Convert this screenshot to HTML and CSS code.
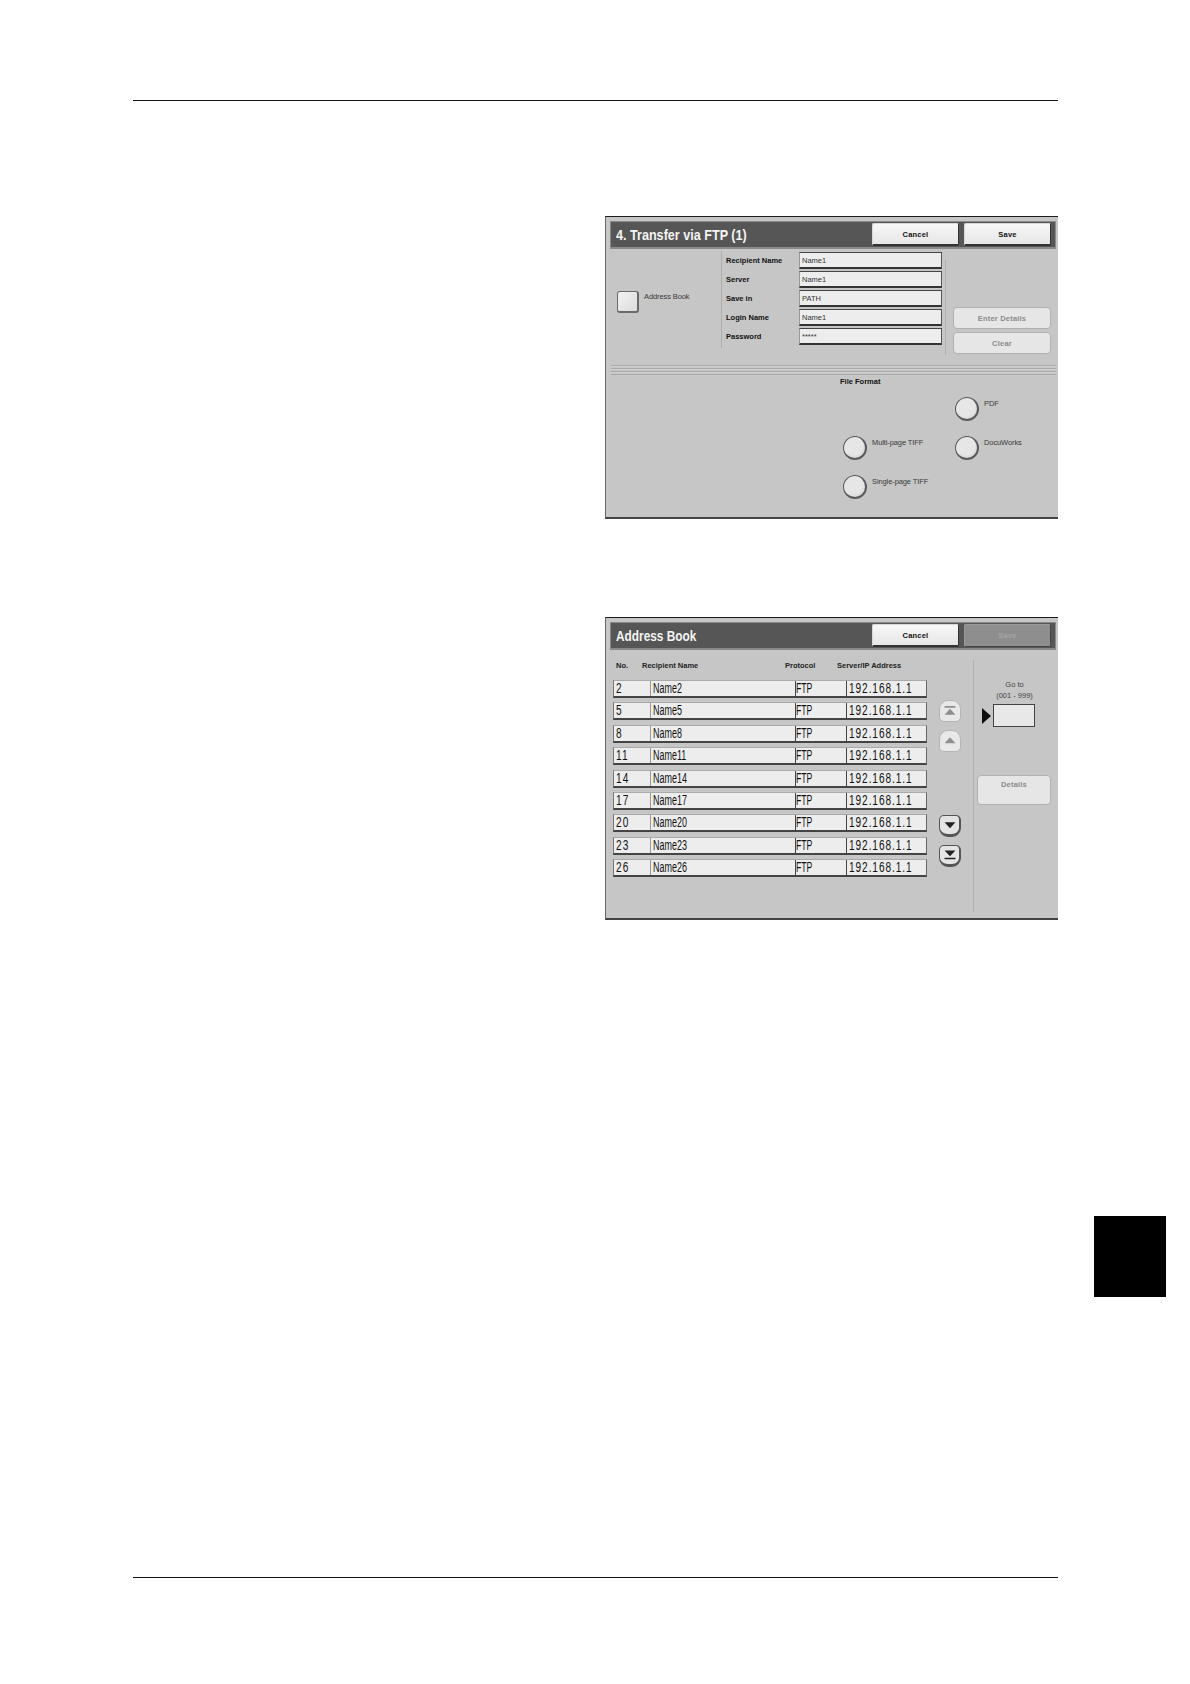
FILE: index.html
```html
<!DOCTYPE html>
<html lang="en">
<head>
<meta charset="utf-8">
<title>Transfer via FTP</title>
<link rel="stylesheet" href="styles.css">
</head>
<body>
<main class="sheet">
  <section class="panel panel-first">
    <header class="bar">
      <h2 class="bar-title">4. Transfer via FTP (1)</h2>
      <button class="btn btn-bar">Cancel</button>
      <button class="btn btn-bar">Save</button>
    </header>
    <div class="recipient">
      <div class="book">
        <span class="check"></span>
        <span class="thin-label book-label">Address Book</span>
      </div>
      <div class="fields">
        <span class="field-label">Recipient Name</span><span class="field-input">Name1</span>
        <span class="field-label">Server</span><span class="field-input">Name1</span>
        <span class="field-label">Save in</span><span class="field-input">PATH</span>
        <span class="field-label">Login Name</span><span class="field-input">Name1</span>
        <span class="field-label">Password</span><span class="field-input">*****</span>
      </div>
      <div class="actions">
        <button class="btn btn-off">Enter Details</button>
        <button class="btn btn-off">Clear</button>
      </div>
    </div>
    <div class="double-rule"></div>
    <div class="format">
      <h3 class="format-title">File Format</h3>
      <div class="radios">
        <span class="radio-slot"></span>
        <span class="radio-item"><span class="radio"></span><span class="thin-label radio-label">PDF</span></span>
        <span class="radio-item"><span class="radio"></span><span class="thin-label radio-label">Multi-page TIFF</span></span>
        <span class="radio-item"><span class="radio"></span><span class="thin-label radio-label">DocuWorks</span></span>
        <span class="radio-item"><span class="radio"></span><span class="thin-label radio-label">Single-page TIFF</span></span>
      </div>
    </div>
  </section>

  <section class="panel panel-second">
    <header class="bar">
      <h2 class="bar-title">Address Book</h2>
      <button class="btn btn-bar">Cancel</button>
      <button class="btn btn-bar btn-dim">Save</button>
    </header>
    <div class="book-body">
      <div class="list">
        <div class="list-head">
          <span>No.</span><span>Recipient Name</span><span>Protocol</span><span>Server/IP Address</span>
        </div>
        <div class="list-row"><span class="c-no"><span class="squeeze">2</span></span><span class="c-name"><span class="squeeze">Name2</span></span><span class="c-proto"><span class="squeeze">FTP</span></span><span class="c-ip"><span class="squeeze">192.168.1.1</span></span></div>
        <div class="list-row"><span class="c-no"><span class="squeeze">5</span></span><span class="c-name"><span class="squeeze">Name5</span></span><span class="c-proto"><span class="squeeze">FTP</span></span><span class="c-ip"><span class="squeeze">192.168.1.1</span></span></div>
        <div class="list-row"><span class="c-no"><span class="squeeze">8</span></span><span class="c-name"><span class="squeeze">Name8</span></span><span class="c-proto"><span class="squeeze">FTP</span></span><span class="c-ip"><span class="squeeze">192.168.1.1</span></span></div>
        <div class="list-row"><span class="c-no"><span class="squeeze">11</span></span><span class="c-name"><span class="squeeze">Name11</span></span><span class="c-proto"><span class="squeeze">FTP</span></span><span class="c-ip"><span class="squeeze">192.168.1.1</span></span></div>
        <div class="list-row"><span class="c-no"><span class="squeeze">14</span></span><span class="c-name"><span class="squeeze">Name14</span></span><span class="c-proto"><span class="squeeze">FTP</span></span><span class="c-ip"><span class="squeeze">192.168.1.1</span></span></div>
        <div class="list-row"><span class="c-no"><span class="squeeze">17</span></span><span class="c-name"><span class="squeeze">Name17</span></span><span class="c-proto"><span class="squeeze">FTP</span></span><span class="c-ip"><span class="squeeze">192.168.1.1</span></span></div>
        <div class="list-row"><span class="c-no"><span class="squeeze">20</span></span><span class="c-name"><span class="squeeze">Name20</span></span><span class="c-proto"><span class="squeeze">FTP</span></span><span class="c-ip"><span class="squeeze">192.168.1.1</span></span></div>
        <div class="list-row"><span class="c-no"><span class="squeeze">23</span></span><span class="c-name"><span class="squeeze">Name23</span></span><span class="c-proto"><span class="squeeze">FTP</span></span><span class="c-ip"><span class="squeeze">192.168.1.1</span></span></div>
        <div class="list-row"><span class="c-no"><span class="squeeze">26</span></span><span class="c-name"><span class="squeeze">Name26</span></span><span class="c-proto"><span class="squeeze">FTP</span></span><span class="c-ip"><span class="squeeze">192.168.1.1</span></span></div>
      </div>
      <div class="scroll">
        <div class="scroll-group">
          <span class="scroll-btn scroll-off"><svg viewBox="0 0 22 22" class="scroll-icon"><path d="M5 5.500h12v1.800H5zM11 8.500l6 6.500H5z"/></svg></span>
          <span class="scroll-btn scroll-off"><svg viewBox="0 0 22 22" class="scroll-icon"><path d="M11 7l6 6.500H5z"/></svg></span>
        </div>
        <div class="scroll-group">
          <span class="scroll-btn scroll-on"><svg viewBox="0 0 22 22" class="scroll-icon"><path d="M5 8h12l-6 6.500z"/></svg></span>
          <span class="scroll-btn scroll-on"><svg viewBox="0 0 22 22" class="scroll-icon"><path d="M5 6h12l-6 6.500zM5 14h12v1.800H5z"/></svg></span>
        </div>
      </div>
      <aside class="goto">
        <div class="goto-label">Go to<br>(001 - 999)</div>
        <div class="goto-entry"><span class="goto-arrow"></span><span class="goto-box"></span></div>
        <button class="btn btn-off btn-details">Details</button>
      </aside>
    </div>
  </section>
</main>
<div class="tab"></div>
</body>
</html>
```
FILE: styles.css
```css
* { box-sizing: border-box; }

html, body {
  margin: 0;
  height: 1684px;
  background: #fff;
  overflow: hidden;
}

body {
  position: relative;
  padding: 100px 132px 0 133px;
  font-family: "Liberation Sans", Arial, sans-serif;
  color: #111;
}

.sheet {
  height: 1478px;
  border-top: 1px solid #111;
  border-bottom: 1px solid #111;
}

.panel {
  width: 453px;
  height: 303px;
  margin-left: auto;
  background: #c6c6c6;
  border-top: 1px solid #1a1a1a;
  border-left: 1px solid #666;
  border-bottom: 2px solid #444;
  padding: 4px 0 0 4px;
}

.panel-first { margin-top: 115px; }
.panel-second { margin-top: 98px; }

.bar {
  width: 446px;
  height: 28px;
  display: flex;
  align-items: center;
  gap: 5px;
  padding: 0 4px 1px 5px;
  background: #565656;
  border: 1px solid #8a8a8a;
  border-bottom-width: 2px;
}

.bar-title {
  flex: 1;
  margin: 2px 0 0;
  color: #f4f4f4;
  font-size: 15px;
  line-height: 18px;
  font-weight: 700;
  white-space: nowrap;
  transform: scaleX(0.79);
  transform-origin: left center;
}

.panel-first .bar-title { transform: scaleX(0.84); }

.btn {
  display: block;
  margin: 0;
  padding: 1px 0 0;
  font-family: inherit;
  font-weight: 700;
  font-size: 7.500px;
  letter-spacing: 0.2px;
  color: #111;
  background: #efefef;
}

.btn-bar {
  width: 87px;
  height: 23px;
  border: 1px solid #d8d8d8;
  border-right: 1px solid #333;
  border-bottom: 2px solid #333;
  border-radius: 2px;
  background: linear-gradient(#f7f7f7, #e6e6e6);
}

.btn-dim {
  background: #8e8e8e;
  color: #a4a4a4;
  border: 1px solid #9a9a9a;
  border-right-color: #444;
  border-bottom-color: #444;
}

.btn-off {
  width: 98px;
  height: 22px;
  border: 1px solid #b0b0b0;
  border-radius: 4px;
  background: #e6e6e6;
  color: #8a8a8a;
}

.recipient {
  display: flex;
  height: 115px;
}

.book {
  width: 111px;
  flex: none;
  display: flex;
  gap: 5px;
  padding: 42px 0 0 7px;
}

.check {
  width: 22px;
  height: 22px;
  flex: none;
  background: linear-gradient(135deg, #f2f2f2, #dcdcdc);
  border: 1px solid #6a6a6a;
  border-right-width: 2px;
  border-bottom-width: 2px;
  border-radius: 3px;
}

.thin-label {
  font-size: 7.500px;
  line-height: 10px;
  color: #3a3a3a;
  white-space: nowrap;
  letter-spacing: -0.1px;
}

.book-label { margin-top: 1px; }

.fields {
  width: 221px;
  height: 97px;
  flex: none;
  margin-top: 2px;
  border-left: 1px solid #aeaeae;
  display: grid;
  grid-template-columns: 73px 143px;
  grid-auto-rows: 19px;
  padding-left: 4px;
  align-items: center;
}

.field-label {
  font-size: 7.500px;
  font-weight: 700;
  color: #111;
  margin-top: -1px;
  white-space: nowrap;
}

.field-input {
  height: 17px;
  padding: 1px 0 0 2px;
  font-size: 7.500px;
  line-height: 14px;
  color: #333;
  background: #ededed;
  border: 1px solid #999;
  border-top-color: #444;
  border-bottom: 2px solid #333;
  border-right-color: #555;
}

.actions {
  margin: 11px 0 0 3px;
  width: 106px;
  height: 95px;
  flex: none;
  border-left: 1px solid #b0b0b0;
  padding: 47px 0 0 7px;
  display: flex;
  flex-direction: column;
  gap: 3px;
}

.double-rule {
  width: 445px;
  height: 10px;
  margin: 1px 0 0 1px;
  background: repeating-linear-gradient(#aaa 0 1px, #cfcfcf 1px 2px, #c6c6c6 2px 3px);
}

.format {
  padding: 2px 0 0 230px;
}

.format-title {
  margin: 0;
  font-size: 7.500px;
  line-height: 10px;
  font-weight: 700;
  color: #111;
}

.radios {
  margin: 10px 0 0 3px;
  display: grid;
  grid-template-columns: 112px 100px;
  grid-auto-rows: 39px;
}

.radio-item {
  display: flex;
  gap: 5px;
}

.radio-label { margin-top: 2px; }

.radio {
  width: 24px;
  height: 24px;
  flex: none;
  border-radius: 50%;
  border: 1px solid #5a5a5a;
  border-right-width: 2px;
  border-bottom-width: 2px;
  background: radial-gradient(circle at 45% 40%, #e6e6e6 55%, #c4c4c4 100%);
}

.book-body {
  display: flex;
  height: 262px;
}

.list {
  width: 314px;
  flex: none;
  margin-left: 3px;
}

.list-head {
  height: 30px;
  padding: 11px 0 0 3px;
  display: grid;
  grid-template-columns: 26px 143px 52px 80px;
  font-size: 7.500px;
  line-height: 10px;
  font-weight: 700;
  color: #222;
  white-space: nowrap;
}

.list-row {
  height: 18px;
  margin-bottom: 4.400px;
  display: grid;
  grid-template-columns: 36px 145px 51px 82px;
  background: #ededed;
  border: 1px solid #aaa;
  border-left-color: #777;
  border-right-color: #666;
  border-bottom: 2px solid #444;
  font-size: 14px;
  line-height: 15px;
  color: #111;
}

.list-row > span { white-space: nowrap; }

.squeeze {
  display: inline-block;
  transform: scaleX(0.64);
  transform-origin: left center;
}

.c-no { padding-left: 2px; }
.c-no .squeeze { letter-spacing: 1.5px; transform: scaleX(0.72); }
.c-name { padding-left: 2px; border-left: 1px solid #999; }
.c-proto { border-left: 1px solid #444; }
.c-proto .squeeze { transform: scaleX(0.62); }
.c-ip { padding-left: 2px; border-left: 1px solid #444; }
.c-ip .squeeze { letter-spacing: 1.300px; transform: scaleX(0.72); }

.scroll {
  width: 22px;
  flex: none;
  margin: 50px 0 0 12px;
  display: flex;
  flex-direction: column;
  gap: 63px;
}

.scroll-group {
  display: flex;
  flex-direction: column;
  gap: 8px;
}

.scroll-btn {
  display: block;
  width: 22px;
  height: 22px;
  border-radius: 9px 9px 5px 5px;
  border: 1px solid #b4b4b4;
  background: #e8e8e8;
}

.scroll-on {
  border-radius: 5px 5px 9px 9px;
  border: 1px solid #555;
  border-right-width: 2px;
  border-bottom-width: 3px;
  background: #e4e4e4;
}

.scroll-icon {
  display: block;
  width: 20px;
  height: 20px;
}

.scroll-off .scroll-icon { fill: #8f8f8f; }
.scroll-on .scroll-icon { fill: #222; margin-top: -1px; }

.goto {
  flex: none;
  width: 78px;
  height: 252px;
  margin: 10px 0 0 12px;
  border-left: 1px solid #b0b0b0;
  padding: 19px 0 0 3px;
}

.goto-label {
  font-size: 7.500px;
  line-height: 11px;
  text-align: center;
  color: #444;
  padding-left: 1px;
  white-space: nowrap;
}

.goto-entry {
  display: flex;
  align-items: center;
  gap: 2px;
  margin-top: 3px;
  padding-left: 5px;
}

.goto-arrow {
  width: 0;
  height: 0;
  border-top: 8px solid transparent;
  border-bottom: 8px solid transparent;
  border-left: 9px solid #0d0d0d;
}

.goto-box {
  width: 42px;
  height: 23px;
  background: #e8e8e8;
  border: 1px solid #444;
}

.btn-details {
  width: 74px;
  height: 30px;
  margin-top: 48px;
  padding: 0 0 11px;
}

.tab {
  position: absolute;
  left: 1094px;
  top: 1216px;
  width: 72px;
  height: 81px;
  background: #000;
}
```
